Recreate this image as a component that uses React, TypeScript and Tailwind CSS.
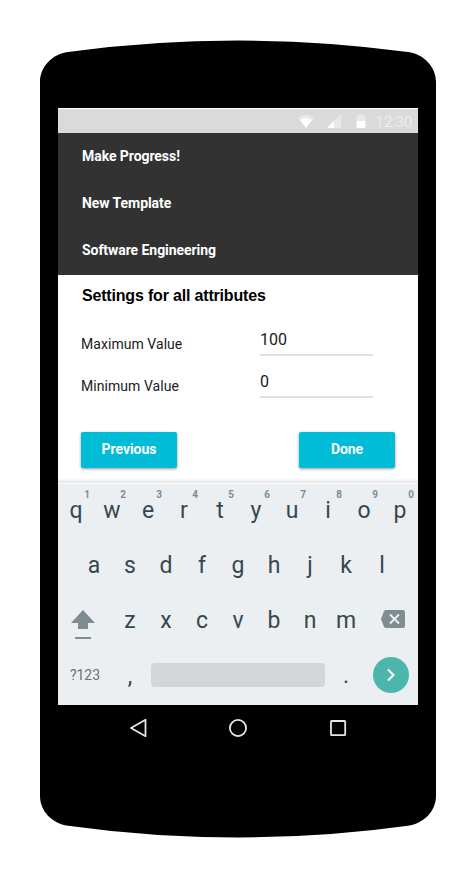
import React from "react";

const topRow = ["q", "w", "e", "r", "t", "y", "u", "i", "o", "p"];
const middleRow = ["a", "s", "d", "f", "g", "h", "j", "k", "l"];
const bottomRow = ["z", "x", "c", "v", "b", "n", "m"];

function PhoneBody() {
  return (
    <svg className="absolute inset-0" width="476" height="878" viewBox="0 0 476 878" aria-hidden="true">
      <path
        d="M40 82C40 67 52 54 68 52Q152 40.6 238 40.6Q324 40.6 408 52C424 54 436 67 436 82V796C436 811 424 823.5 408 825.7Q324 837.4 238 837.4Q152 837.4 68 825.7C52 823.5 40 811 40 796Z"
        fill="#000"
      />
    </svg>
  );
}

function StatusBar() {
  return (
    <div className="flex h-[25px] items-center justify-end border-t border-white bg-[#dadada] pr-1.5 pt-[2px]">
      <svg width="76" height="20" viewBox="0 0 76 20" className="mr-[5px]" aria-hidden="true">
        <path d="M3 5.5Q11 0 19 5.5L11 16Z" fill="#e8e8e8" />
        <path d="M5 8Q11 4.5 17 8L11 16Z" fill="#fff" />
        <path d="M46 2V16H32Z" fill="#e8e8e8" />
        <path d="M39 9V16H32Z" fill="#fff" />
        <path d="M61.5 3.5H63.5V2.5H68.5V3.5H70.5V9H61.5Z" fill="#e8e8e8" />
        <path d="M61.5 9H70.5V16H61.5Z" fill="#fff" />
      </svg>
      <span className="text-[15px] leading-5 text-[#f5f5f5] font-light">12:30</span>
    </div>
  );
}

function Field({ label, value }: { label: string; value: string }) {
  return (
    <div className="flex h-[42px] pl-[23px] text-[#212121]">
      <span className="w-[179px] pt-[9px] text-sm leading-5 tracking-[0.05px]">{label}</span>
      <span className="h-[31px] w-[113px] border-b-2 border-[#e0e0e0] pt-[3px] text-base leading-6">{value}</span>
    </div>
  );
}

function ActionButton({ label }: { label: string }) {
  return (
    <button className="h-9 w-24 rounded-[2px] bg-[#00bcd7] pb-[2px] text-sm leading-5 font-bold tracking-[-0.05px] text-white shadow-[0_1px_3px_rgba(0,0,0,0.4)]">
      {label}
    </button>
  );
}

function Key({ letter, digit }: { letter: string; digit?: number }) {
  return (
    <span className="relative w-9 text-center text-[23px] leading-[53px]">
      {letter}
      {digit !== undefined && (
        <span className="absolute top-[5px] right-[4px] text-[10px] leading-3 font-bold text-[#7f8b90]">{digit}</span>
      )}
    </span>
  );
}

function Keyboard() {
  return (
    <div className="h-[221px] bg-[#ebeff2] text-[#37474f]">
      <div className="flex h-[55px]">
        {topRow.map((letter, i) => (
          <Key key={letter} letter={letter} digit={(i + 1) % 10} />
        ))}
      </div>
      <div className="flex h-[55px] justify-center">
        {middleRow.map((letter) => (
          <Key key={letter} letter={letter} />
        ))}
      </div>
      <div className="flex h-[55px]">
        <svg width="54" height="55" viewBox="0 0 54 55" fill="#818c90" aria-hidden="true">
          <path d="M25 16L37 29H30V35H20V29H13ZM17 43H33V45H17Z" />
        </svg>
        {bottomRow.map((letter) => (
          <Key key={letter} letter={letter} />
        ))}
        <svg width="54" height="55" viewBox="0 0 54 55" aria-hidden="true">
          <path d="M22 16H39Q41 16 41 18V32Q41 34 39 34H22Q20.8 34 20 32.7L17 25L20 17.3Q20.8 16 22 16Z" fill="#818c90" />
          <path d="M26 20.5L35 29.5M35 20.5L26 29.5" stroke="#ebeff2" strokeWidth="2" />
        </svg>
      </div>
      <div className="flex h-[52px] items-center">
        <span className="w-[54px] text-center text-sm text-[#687377]">?123</span>
        <span className="flex pt-[2px]">
          <Key letter="," />
        </span>
        <span className="ml-[3px] h-6 w-[174px] rounded-[4px] bg-[#d2d6d9]" />
        <span className="ml-[3px] flex">
          <Key letter="." />
        </span>
        <span className="ml-[9px] flex size-9 items-center justify-center rounded-full bg-[#4db6ac]">
          <svg width="36" height="36" viewBox="0 0 36 36" fill="none" stroke="#fff" strokeWidth="2" aria-hidden="true">
            <path d="M15 12.5L20.5 18L15 23.5" />
          </svg>
        </span>
      </div>
    </div>
  );
}

function NavigationBar() {
  return (
    <svg width="360" height="46" viewBox="0 0 360 46" fill="none" stroke="#e6e6e6" strokeWidth="1.8" strokeLinejoin="round" aria-hidden="true">
      <path d="M73 23L87.500 14.800V31.200Z" />
      <circle cx="180" cy="23" r="8.1" />
      <rect x="273" y="16" width="14.2" height="14.2" rx=".7" />
    </svg>
  );
}

export default function App() {
  return (
    <div className="relative h-[878px] w-[476px] bg-white pt-[108px] font-[Roboto,sans-serif]">
      <PhoneBody />
      <main className="relative mx-auto w-[360px]">
        <StatusBar />
        <header className="h-[142px] bg-[#323232] pl-6 text-sm leading-[47px] font-bold tracking-[-0.06px] text-white">
          <p>Make Progress!</p>
          <p>New Template</p>
          <p>Software Engineering</p>
        </header>
        <section className="h-[209px] overflow-hidden bg-white">
          <h1 className="pt-[10px] pl-6 font-['Liberation_Sans',Arial,sans-serif] text-base leading-[22px] font-bold tracking-[-0.18px] text-black">
            Settings for all attributes
          </h1>
          <div className="mt-[18px]">
            <Field label="Maximum Value" value="100" />
            <Field label="Minimum Value" value="0" />
          </div>
          <div className="mt-[23px] flex justify-between px-[23px]">
            <ActionButton label="Previous" />
            <ActionButton label="Done" />
          </div>
          <div className="mt-[10px] h-[5px] bg-linear-to-b from-white to-[#e4e4e4]" />
        </section>
        <Keyboard />
        <NavigationBar />
      </main>
    </div>
  );
}
